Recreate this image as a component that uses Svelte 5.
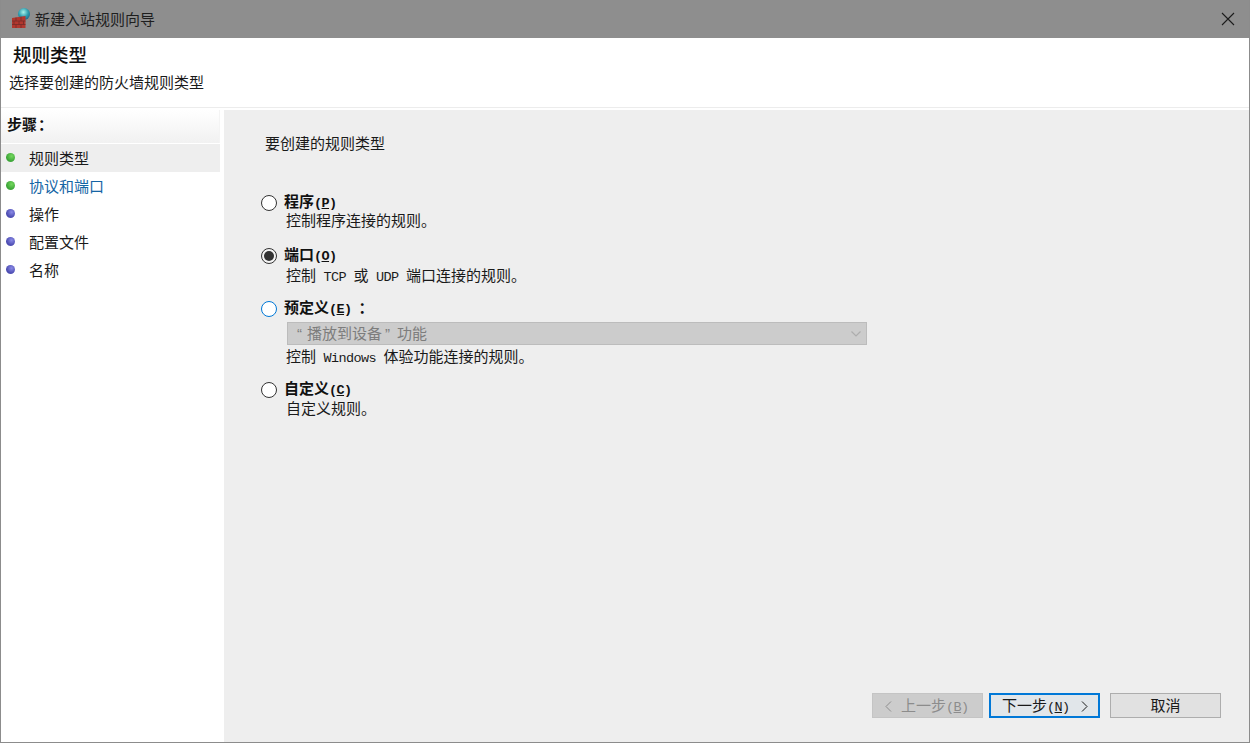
<script>
  const steps = [
    { label: '规则类型', done: true, active: true },
    { label: '协议和端口', done: true, link: true },
    { label: '操作' },
    { label: '配置文件' },
    { label: '名称' }
  ];
</script>

<div class="win">
  <div class="titlebar">
    <svg class="appicon" width="20" height="20" viewBox="0 0 20 20">
      <defs>
        <radialGradient id="globe" cx="0.45" cy="0.35" r="0.7">
          <stop offset="0" stop-color="#a8f0e8" />
          <stop offset="0.55" stop-color="#2f9fb0" />
          <stop offset="1" stop-color="#1f5f86" />
        </radialGradient>
      </defs>
      <circle cx="14" cy="6" r="6" fill="url(#globe)" />
      <path d="M2 10 L15.5 8 L15.5 20 L2 20 Z" fill="#b2372e" />
      <path d="M2 13h13.5M2 16.5h13.5M6 9.5v3.5M11 8.8v4.2M4 13v3.5M9 13v3.5M13.5 13v3.5M6 16.5v3.5M11 16.5v3.5" stroke="#762c28" stroke-width="0.8" fill="none" />
    </svg>
    <span class="title">新建入站规则向导</span>
    <svg class="close" width="14" height="14" viewBox="0 0 14 14">
      <path d="M1 1 L13 13 M13 1 L1 13" stroke="#1c1c1c" stroke-width="1.1" fill="none" />
    </svg>
  </div>

  <header class="head">
    <h1>规则类型</h1>
    <p>选择要创建的防火墙规则类型</p>
  </header>

  <div class="body">
    <nav class="side">
      <div class="steps-head">步骤<span class="colon">：</span></div>
      <ul>
        {#each steps as s}
          <li class:active={s.active} class:link={s.link}>
            <span class="dot" class:done={s.done}></span>
            <span>{s.label}</span>
          </li>
        {/each}
      </ul>
    </nav>

    <main class="content">
      <div class="intro">要创建的规则类型</div>

      <div class="opt first">
        <span class="radio"></span>
        <span class="lab">程序<span class="lat b">(<u>P</u>)</span></span>
      </div>
      <div class="desc d1">控制程序连接的规则。</div>

      <div class="opt second">
        <span class="radio on"><span class="mark"></span></span>
        <span class="lab">端口<span class="lat b">(<u>O</u>)</span></span>
      </div>
      <div class="desc">控制<span class="lat">{' TCP '}</span>或<span class="lat">{' UDP '}</span>端口连接的规则。</div>

      <div class="opt third">
        <span class="radio focus"></span>
        <span class="lab">预定义<span class="lat b">(<u>E</u>)</span><span class="lc">：</span></span>
      </div>
      <div class="combo">
        <span class="ctext"><span class="q1">“</span>播放到设备<span class="q2">”</span>功能</span>
        <svg width="10" height="6" viewBox="0 0 10 6"><path d="M0.5 0.5 L5 5 L9.5 0.5" stroke="#adadad" stroke-width="1.2" fill="none" /></svg>
      </div>
      <div class="desc d3">控制<span class="lat">{' Windows '}</span>体验功能连接的规则。</div>

      <div class="opt fourth">
        <span class="radio"></span>
        <span class="lab">自定义<span class="lat b">(<u>C</u>)</span></span>
      </div>
      <div class="desc d4">自定义规则。</div>

      <div class="footer">
        <button class="btn disabled" disabled>
          <svg class="chev left" width="7" height="11" viewBox="0 0 7 11"><path d="M6 0.5 L1 5.5 L6 10.5" fill="none" stroke="currentColor" /></svg>
          <span>上一步<span class="lat">(<u>B</u>)</span></span>
        </button>
        <button class="btn primary">
          <span>下一步<span class="lat">(<u>N</u>)</span></span>
          <svg class="chev right" width="7" height="11" viewBox="0 0 7 11"><path d="M1 0.5 L6 5.5 L1 10.5" fill="none" stroke="currentColor" /></svg>
        </button>
        <button class="btn cancel">取消</button>
      </div>
    </main>
  </div>
</div>

<style>
  :global(body) {
    margin: 0;
    background: #fff;
  }
  .win {
    width: 1250px;
    height: 743px;
    box-sizing: border-box;
    display: flex;
    flex-direction: column;
    border: 1px solid #8c8c8c;
    border-top: 0;
    background: #fff;
    overflow: hidden;
    font-family: "Noto Sans CJK SC", "Liberation Sans", sans-serif;
    font-size: 15px;
    color: #1a1a1a;
  }
  .lat {
    font-family: "Liberation Mono", monospace;
    font-size: 13.5px;
    letter-spacing: -0.6px;
    white-space: pre;
  }
  .lat.b {
    font-weight: 700;
  }
  .titlebar {
    height: 38px;
    flex: none;
    margin: 0 -1px;
    display: flex;
    align-items: center;
    background: #8e8e8e;
    padding: 0 15px 0 10px;
  }
  .appicon {
    flex: none;
    margin-top: -2px;
  }
  .title {
    margin-left: 5px;
    color: #1e1e1e;
    line-height: 20px;
  }
  .close {
    margin-left: auto;
  }
  .head {
    height: 70px;
    flex: none;
    box-sizing: border-box;
    border-bottom: 1px solid #ececec;
    padding-top: 4px;
  }
  h1 {
    margin: 0 0 0 12px;
    font-size: 18.5px;
    font-weight: 500;
    line-height: 24px;
    color: #111;
  }
  .head p {
    margin: 6px 0 0 8px;
    line-height: 20px;
  }
  .body {
    flex: 1;
    display: flex;
    min-height: 0;
    padding-top: 2px;
  }
  .side {
    width: 223px;
    flex: none;
    box-sizing: border-box;
  }
  .steps-head {
    width: 219px;
    height: 33px;
    box-sizing: border-box;
    padding-left: 6px;
    line-height: 28px;
    font-weight: 700;
    color: #111;
    background: linear-gradient(#ffffff, #f1f1f1);
    border-right: 1px solid #f4f4f4;
  }
  .colon {
    margin-left: 1px;
  }
  ul {
    list-style: none;
    margin: 1px 0 0;
    padding: 0;
    width: 219px;
  }
  li {
    height: 28px;
    display: flex;
    align-items: center;
    padding-left: 5px;
    line-height: 28px;
  }
  li.active {
    background: #eeeeee;
  }
  li.link {
    color: #1565a5;
  }
  .dot {
    width: 9px;
    height: 9px;
    flex: none;
    margin-right: 14px;
    margin-top: -2px;
    border-radius: 50%;
    background: radial-gradient(circle at 62% 35%, #8a8ae6, #4a4ab0 65%, #a6a6d8);
  }
  .dot.done {
    background: radial-gradient(circle at 62% 35%, #74d85e, #3aa336 65%, #a3d29e);
  }
  .content {
    flex: 1;
    min-width: 0;
    display: flex;
    flex-direction: column;
    background: #eeeeee;
    padding-left: 37px;
  }
  .intro {
    margin: 23px 0 0 4px;
    line-height: 20px;
  }
  .opt {
    display: flex;
    align-items: center;
    height: 20px;
    flex: none;
  }
  .opt.first {
    margin-top: 39px;
  }
  .opt.second {
    margin-top: 16px;
  }
  .opt.third {
    margin-top: 14px;
  }
  .opt.fourth {
    margin-top: 14px;
  }
  .radio {
    width: 16px;
    height: 16px;
    flex: none;
    margin-top: 2px;
    box-sizing: border-box;
    border: 1px solid #333;
    border-radius: 50%;
    background: #fff;
    display: flex;
    align-items: center;
    justify-content: center;
  }
  .radio.on {
    background: #f4f4f4;
  }
  .radio.focus {
    border-color: #0078d7;
  }
  .mark {
    width: 10px;
    height: 10px;
    border-radius: 50%;
    background: #333;
  }
  .lab {
    margin-left: 7px;
    font-weight: 700;
    line-height: 20px;
    color: #111;
  }
  .lc {
    margin-left: 7px;
  }
  .desc {
    margin: 0 0 0 25px;
    line-height: 20px;
    height: 19px;
    flex: none;
  }
  .d1 {
    margin-top: -2px;
  }
  .d3 {
    margin-top: 1px;
  }
  .d4 {
    margin-top: -1px;
  }
  .combo {
    margin: 4px 0 0 26px;
    width: 580px;
    height: 23px;
    box-sizing: border-box;
    flex: none;
    display: flex;
    align-items: center;
    justify-content: space-between;
    padding: 0 5px 0 9px;
    background: #cccccc;
    border: 1px solid #bcbcbc;
    color: #7d7d7d;
  }
  .ctext {
    margin-top: -2px;
  }
  .q1,
  .q2 {
    font-family: "Liberation Sans", sans-serif;
  }
  .q1 {
    margin-right: 5px;
  }
  .q2 {
    margin: 0 7px 0 3px;
  }
  .footer {
    margin-top: auto;
    padding-bottom: 24px;
    margin-left: 611px;
    display: flex;
  }
  .btn {
    width: 111px;
    height: 25px;
    box-sizing: border-box;
    padding: 0;
    font: inherit;
    color: #1a1a1a;
    line-height: 20px;
    border: 1px solid #adadad;
    background: #e1e1e1;
    display: flex;
    align-items: center;
    justify-content: center;
  }
  .disabled {
    background: #cccccc;
    border-color: #c4c4c4;
    color: #8c8c8c;
    justify-content: flex-start;
    padding: 1px 0 0 12px;
  }
  .primary {
    margin-left: 6px;
    border: 2px solid #0078d7;
    background: #e1e6ea;
    justify-content: flex-start;
    padding: 1px 0 0 11px;
  }
  .cancel {
    margin-left: 10px;
    padding-bottom: 1px;
  }
  .chev.left {
    margin-right: 9px;
  }
  .chev.right {
    margin-left: 11px;
  }
</style>
